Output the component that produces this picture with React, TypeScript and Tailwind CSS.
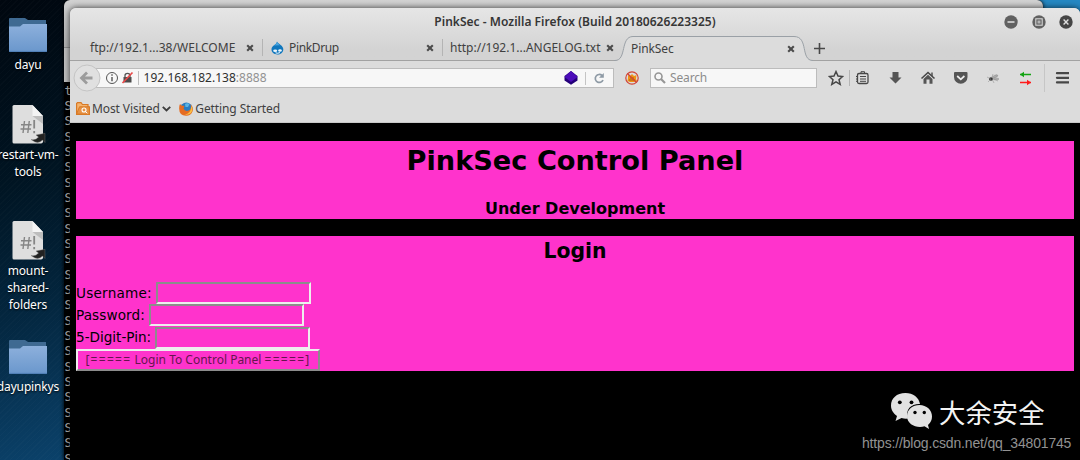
import React from "react";

const UI = "font-['Noto_Sans',sans-serif]";

function Folder() {
  return (
    <svg width="38" height="35" viewBox="0 0 38 35" className="mt-px block">
      <defs>
        <linearGradient id="fold" x1="0" y1="0" x2="0" y2="1">
          <stop offset="0" stopColor="#8db0dc" />
          <stop offset="1" stopColor="#6a97cc" />
        </linearGradient>
      </defs>
      <path d="M0 2Q0 1 1 1H16L19 3H37V14H0Z" fill="#3f6a92" />
      <path d="M0 9.5H11L14 7H38V33.5Q38 35 37 35H1Q0 35 0 33.5Z" fill="url(#fold)" />
      <path d="M0 34.4H38" stroke="#4f7eb5" />
    </svg>
  );
}

function Script() {
  return (
    <svg width="34" height="40" viewBox="0 0 34 40" className="ml-px block">
      <path d="M2 1H20.5L31 12V37.5Q31 39.5 29 39.5H2Q.5 39.5 .5 38V2.5Q.5 1 2 1Z" fill="#dedede" />
      <path d="M20.5 12H31V20Z" fill="#bdbdbd" />
      <path d="M20.5 1L31 12H20.5Z" fill="#f4f4f4" />
      <path d="M12.500 17L11 29M17.300 17L15.800 29M9 20.800H19.500M8.500 25H19" stroke="#858585" strokeWidth="1.4" fill="none" />
      <path d="M22.200 16V24.500M22.200 27V29.300" stroke="#858585" strokeWidth="1.8" />
      <path d="M19 35.500Q24 36.500 26.500 33L24 31L33 29.300V38.500L30.500 36Q26 41 19 35.500Z" fill="#222" stroke="#777" strokeWidth=".4" />
    </svg>
  );
}

function DeskIcon({ lines, kind }: { lines: string[]; kind: "folder" | "script" }) {
  return (
    <div className="flex w-[70px] flex-col items-center">
      {kind === "folder" ? <Folder /> : <Script />}
      <div
        className={
          UI +
          " text-center text-[12px] leading-[17px] tracking-[-0.15px] whitespace-nowrap text-white [text-shadow:0_1px_2px_#000] " +
          (kind === "folder" ? "mt-[4px]" : "mt-[2px]")
        }
      >
        {lines.map((l) => (
          <div key={l}>{l}</div>
        ))}
      </div>
    </div>
  );
}

function Close() {
  return (
    <svg width="8" height="8" viewBox="0 0 8 8" className="block shrink-0">
      <path d="M1.200 1.200L6.800 6.800M6.800 1.200L1.200 6.800" stroke="#4b4b4b" strokeWidth="2.1" />
    </svg>
  );
}

function Drupal() {
  return (
    <svg width="13" height="14" viewBox="0 0 13 14" className="mr-[5px] block shrink-0">
      <path d="M6 .5C7 3 12.500 4.500 12.300 8.500C12 12 9.500 13.500 6.500 13.500C3 13.500 .5 11.500 .5 8.300C.5 4.500 5.500 4 6 .5Z" fill="#1177bd" />
      <path d="M3 4.500Q5.500 3.700 6 .8Q7 3 9 4.300Z" fill="#4aa5df" />
      <ellipse cx="4.200" cy="9.800" rx="2" ry="1.200" fill="#eef6fc" />
      <ellipse cx="9" cy="9.500" rx="1.800" ry="1.200" fill="#eef6fc" />
      <path d="M4.500 11.800Q6.500 12.800 9 11.600" stroke="#fff" fill="none" />
    </svg>
  );
}

function WinButton({ dark, children }: { dark?: boolean; children: React.ReactNode }) {
  return (
    <svg width="14" height="14" viewBox="0 0 14 14" className="block">
      <circle cx="7" cy="7" r="6.700" fill={dark ? "#454545" : "#616161"} />
      {children}
    </svg>
  );
}

function TitleBar() {
  return (
    <div className="flex h-[27px] items-center">
      <div className={UI + " w-[1010px] shrink-0 text-center text-[12px] font-semibold tracking-[0.03px] text-[#363636]"}>
        PinkSec - Mozilla Firefox (Build 20180626223325)
      </div>
      <div className="-ml-[76px] flex shrink-0 gap-[13.500px]">
        <WinButton><path d="M3.500 7H10.500" stroke="#e2e2e2" strokeWidth="1.500" /></WinButton>
        <WinButton>
          <rect x="3.800" y="3.800" width="6.400" height="6.400" fill="none" stroke="#d6d6d6" strokeWidth="1.100" />
          <rect x="5.500" y="5.500" width="3" height="3" fill="#b5b5b5" />
        </WinButton>
        <WinButton dark><path d="M4.600 4.600L9.400 9.400M9.400 4.600L4.600 9.400" stroke="#dedede" strokeWidth="1.400" /></WinButton>
      </div>
    </div>
  );
}

function Tabs() {
  return (
    <div className={UI + " flex h-[26px] border-b border-[#a2a2a2] pl-[12px] text-[12px] text-[#404040]"}>
      <div className="flex w-[180px] items-center pt-px pr-2 pl-[8px]">
        <span className="flex-1 whitespace-nowrap tracking-[0.03px]">ftp://192.1...38/WELCOME</span>
        <Close />
      </div>
      <div className="my-[4px] w-px bg-[#b4b4b4]" />
      <div className="flex w-[179px] items-center pt-px pr-2 pl-[8px]">
        <Drupal />
        <span className="flex-1 tracking-[-0.35px]">PinkDrup</span>
        <Close />
      </div>
      <div className="my-[4px] w-px bg-[#b4b4b4]" />
      <div className="flex w-[171px] items-center pt-px pl-[7px]">
        <span className="w-[156px] shrink-0 whitespace-nowrap">http://192.1...ANGELOG.txt</span>
        <Close />
      </div>
      <div className="relative -mb-px flex h-[26px] w-[200px] items-center pt-px pr-[19px] pl-[17px]">
        <svg className="absolute top-0 left-0" width="200" height="26" viewBox="0 0 200 26">
          <path d="M-3 25.500H1C13 25.500 6 1.500 19 1.500H180C195 1.500 186 25.500 199 25.500V26H-3Z" fill="#dcdcdc" />
          <path d="M-3 25.500H1C13 25.500 6 1.500 19 1.500H180C195 1.500 186 25.500 199 25.500" fill="none" stroke="#9aa0a6" />
        </svg>
        <span className="relative flex-1 tracking-[-0.1px]">PinkSec</span>
        <div className="relative"><Close /></div>
      </div>
      <svg width="11" height="11" viewBox="0 0 11 11" className="mt-[8px] ml-[-0.500px] block">
        <path d="M5.500 0V11M0 5.500H11" stroke="#484848" strokeWidth="1.600" />
      </svg>
    </div>
  );
}

function NavIcons() {
  return (
    <svg width="250" height="34" viewBox="0 0 250 34" className="block shrink-0" fill="none" stroke="#474747">
      <path d="M17 10.500L19 15L23.500 15.500L20 18.700L21.200 23.300L17 20.800L12.800 23.300L14 18.700L10.500 15.500L15 15Z" strokeWidth="1.500" />
      <path d="M30.500 9V25" stroke="#b5b5b5" />
      <rect x="38.500" y="12.500" width="10.500" height="10" rx="1.500" strokeWidth="1.300" />
      <path d="M42 12V10.700H45.500V12M41 15.500H47M41 18H47M41 20.300H47M37 15.500H39M37 18H39M37 20.300H39" strokeWidth="1" />
      <path d="M73.500 11H79.500V16.500H82.500L76.500 22.500L70.500 16.500H73.500Z" fill="#555" stroke="none" />
      <path d="M102.500 17.500L109 11.500L115.500 17.500" strokeWidth="1.600" />
      <path d="M104.500 18L109 13.800L113.500 18V22.800H110.500V18.500H107.500V22.800H104.500Z" fill="#555" stroke="none" />
      <path d="M113 11.500V15" strokeWidth="1.400" />
      <path d="M136 11H147.500Q148.500 11 148.500 12V16A6.500 6.500 0 0 1 135 16V12Q135 11 136 11Z" fill="#555" stroke="none" />
      <path d="M138.200 15L141.800 18.300L145.400 15" stroke="#eee" strokeWidth="1.700" />
      <g stroke="#888" strokeWidth=".5">
        <ellipse cx="172" cy="18" rx="2" ry="1.700" fill="#333" stroke="none" />
        <ellipse cx="176" cy="15.500" rx="3" ry="1.200" fill="#aaa" transform="rotate(-25 176 15.500)" />
        <ellipse cx="177" cy="18" rx="3" ry=".9" fill="#bbb" />
        <path d="M168 16L172 18L169 21M173 18L175 22M173 16L174 13M175 18L179 20" />
      </g>
      <path d="M201 13.500H212" stroke="#12a312" strokeWidth="1.300" />
      <path d="M201 13.500L205 10.800V16.200Z" fill="#12a312" stroke="none" />
      <path d="M201 21.500H212" stroke="#ff1b1b" strokeWidth="1.300" />
      <path d="M212 21.500L208 18.800V24.200Z" fill="#ff1b1b" stroke="none" />
      <path d="M225.500 3V31" stroke="#c6c6c6" />
      <path d="M238 12.200H250M238 16.800H250M238 21.400H250" strokeWidth="2.300" strokeLinecap="round" />
    </svg>
  );
}

function NavBar() {
  return (
    <div className={UI + " flex h-[34px] items-center text-[12px]"}>
      <svg width="29" height="28" viewBox="0 0 29 28" className="relative z-10 ml-[3px] block shrink-0">
        <circle cx="14" cy="14" r="13" fill="#e0e0e0" stroke="#c4c4c4" />
        <path d="M14 8.500L8.500 14L14 19.500M9 14H19.500" stroke="#9c9c9c" strokeWidth="2.800" fill="none" />
      </svg>
      <div className="-ml-[6px] flex h-[20px] w-[518px] shrink-0 items-center border border-[#bcbcbc] bg-[#f7f7f7] pl-[8px]">
        <svg width="37" height="18" viewBox="0 0 37 18" className="block shrink-0" fill="none">
          <circle cx="7" cy="9" r="5.500" stroke="#555" />
          <path d="M7 8V12.300M7 5.300V6.800" stroke="#444" strokeWidth="1.300" />
          <path d="M18.500 8H26.500V13.500H18.500Z" fill="#4b4b4b" />
          <path d="M20 9V6.500Q20 4.300 22.500 4.300T25 6.500V9" stroke="#555" strokeWidth="1.300" />
          <path d="M17.500 14L27.500 3.500" stroke="#e84949" strokeWidth="1.700" />
          <path d="M33.500 2V16" stroke="#bdbdbd" />
        </svg>
        <span className="ml-[1.500px] tracking-[0.020px] text-[#303030]">192.168.182.138<span className="text-[#929292]">:8888</span></span>
        <svg width="45" height="18" viewBox="0 0 45 18" className="mr-[4px] ml-auto block shrink-0" fill="none">
          <path d="M7 2L13.500 7V11.500L7 15.700L.5 11.500V7Z" fill="#240079" />
          <path d="M7 2L13.500 8L7 13L.5 8Z" fill="#4c0cba" />
          <path d="M21.500 3V16" stroke="#c4c4c4" />
          <path d="M38 6.500A4 4 0 1 0 39 11" stroke="#8e9aa5" strokeWidth="1.700" />
          <path d="M39.800 4V8.800H35Z" fill="#8e9aa5" />
        </svg>
      </div>
      <svg width="14" height="14" viewBox="0 0 14 14" className="ml-[11px] block shrink-0">
        <path d="M3 4L5 5L7 3L9 5L11.500 4L11 8L12 10L9 11L5 11L2.500 10L3 7Z" fill="#ef9414" />
        <path d="M5 7H9M4 9H10" stroke="#a85d12" />
        <circle cx="7" cy="7" r="6.200" stroke="#d24536" strokeWidth="1.200" fill="none" />
        <path d="M2.500 2.500L11.500 11.500" stroke="#d24536" strokeWidth="1.200" />
      </svg>
      <div className="ml-[11px] flex h-[20px] w-[167px] shrink-0 items-center border border-[#bcbcbc] bg-[#f7f7f7] pl-[3px] tracking-[-0.15px] text-[#8c8c8c]">
        <svg width="12" height="12" viewBox="0 0 12 12" className="mr-[4px] block">
          <circle cx="4.500" cy="4.500" r="3.500" stroke="#969696" strokeWidth="1.600" fill="none" />
          <path d="M7 7L11 11" stroke="#969696" strokeWidth="2.200" />
        </svg>
        Search
      </div>
      <div className="ml-[2px]"><NavIcons /></div>
    </div>
  );
}

function Bookmarks() {
  return (
    <div className={UI + " flex h-[28px] items-center border-b border-[#c8c8c8] pl-[6px] text-[12px] text-[#404040]"}>
      <svg width="14" height="13" viewBox="0 0 14 13" className="mr-[2px] block">
        <path d="M.6 12.400V1.500L1.500 .6H5L6.500 2.500H12V5H13.400V12.400Z" fill="#f5b46e" stroke="#d87925" strokeWidth="1.200" />
        <path d="M.6 12L3.500 4.800H13.400V12.400Z" fill="#e69245" stroke="#d87925" />
        <circle cx="8" cy="8" r="2" stroke="#fff" fill="none" strokeWidth="1.100" />
        <path d="M9.500 9.500L11.300 11.300" stroke="#fff" />
      </svg>
      <span className="tracking-[-0.1px]">Most Visited</span>
      <svg width="9" height="6" viewBox="0 0 9 6" className="ml-[2px] block">
        <path d="M.8 .8L4.500 4.500L8.200 .8" stroke="#3d3d3d" strokeWidth="1.900" fill="none" />
      </svg>
      <svg width="14" height="14" viewBox="0 0 14 14" className="mr-[2px] ml-[8.500px] block">
        <circle cx="7.300" cy="6.500" r="6" fill="#2a7dc1" />
        <path d="M6 2Q8 .5 10.500 2L9 5L6.500 5Z" fill="#59b5e5" />
        <path d="M1 2L2.500 3.500L5.500 4L4.500 6.500Q5.500 9.500 9 8.800Q12 8 12 4.500L11.500 2Q15 6 13.500 9.500Q11.500 14 7 13.800Q.2 13.500 .2 7Q0 4 1 2Z" fill="#e56c22" />
        <path d="M12.500 4Q14.500 7.500 12 11Q9.500 13.500 6 12.500Q11.500 12 12.500 4Z" fill="#f8c144" />
      </svg>
      <span className="tracking-[-0.1px]">Getting Started</span>
    </div>
  );
}

function Field({ label, spacing }: { label: string; spacing: string }) {
  return (
    <label className="flex h-[22.400px] items-center">
      <span className={"mr-[4px] whitespace-nowrap " + spacing}>{label}</span>
      <input className="h-[22px] w-[155px] border-2 border-t-[#8c8c8c] border-r-[#eeeeee] border-b-[#eeeeee] border-l-[#8c8c8c] bg-[#ff33cc] outline-none" />
    </label>
  );
}

function Page() {
  return (
    <div className="flex flex-1 flex-col bg-black px-[6px] pt-[18px] font-['DejaVu_Sans',sans-serif] text-black">
      <div className="h-[78px] bg-[#ff33cc] text-center font-bold">
        <h1 className="pt-[3px] text-[27.200px] leading-[34px]">PinkSec Control Panel</h1>
        <h3 className="pt-[21px] text-[16px] leading-[20px]">Under Development</h3>
      </div>
      <div className="mt-[17px] h-[135px] bg-[#ff33cc] text-[13.600px]">
        <h2 className="h-[45.600px] pt-[2px] text-center text-[20.400px] leading-[26px] font-bold">Login</h2>
        <Field label="Username:" spacing="tracking-[0.22px]" />
        <Field label="Password:" spacing="tracking-[0.1px]" />
        <Field label="5-Digit-Pin:" spacing="tracking-[-0.02px]" />
        <button className={UI + " block h-[22px] w-[244px] border-2 border-t-[#eeeeee] border-r-[#8c8c8c] border-b-[#8c8c8c] border-l-[#eeeeee] text-[12px] leading-[18px] whitespace-nowrap text-[#67154f]"}>
          <span className="tracking-[1.300px]">[=====</span> Login To Control Panel <span className="tracking-[1.300px]">=====]</span>
        </button>
      </div>
    </div>
  );
}

export default function App() {
  return (
    <div className="relative h-[460px] w-[1080px] overflow-hidden bg-[#2588c3]">
      <div className="absolute inset-y-0 left-0 w-[70px] bg-[repeating-linear-gradient(135deg,#ffffff04_0px,#ffffff04_1px,transparent_1px,transparent_4px),linear-gradient(165deg,#00070f_0%,#001422_38%,#03253d_65%,#0b426b_100%)]" />
      <div className="absolute top-[16px] left-[-7px]"><DeskIcon kind="folder" lines={["dayu"]} /></div>
      <div className="absolute top-[104px] left-[-7px]"><DeskIcon kind="script" lines={["restart-vm-", "tools"]} /></div>
      <div className="absolute top-[220px] left-[-7px]"><DeskIcon kind="script" lines={["mount-", "shared-", "folders"]} /></div>
      <div className="absolute top-[338px] left-[-7px]"><DeskIcon kind="folder" lines={["dayupinkys"]} /></div>

      <div className="absolute top-0 left-[64px] flex h-[460px] w-[979px] flex-col overflow-hidden rounded-t-[6px] bg-black shadow-[0_0_4px_#000]">
        <div className="h-[48px] shrink-0 border-b border-[#8d8d8d] bg-linear-to-b from-[#d2d2d2] to-[#b0b0b0]" />
        <div className="h-[34px] shrink-0 bg-[#c0c0c0]" />
        <div className="pt-[1.500px] pl-[0.500px] font-['DejaVu_Sans_Mono',monospace] text-[12px] leading-[15.350px] text-[#b5b5b5]">
          <div>t</div>
          {Array.from({ length: 24 }, (_, i) => (
            <div key={i}>S</div>
          ))}
        </div>
      </div>

      <div className="absolute top-[8px] left-[70px] flex h-[452px] w-[1010px] flex-col overflow-hidden rounded-t-[6px] bg-[#dcdcdc] shadow-[0_0_6px_#000b]">
        <div className="bg-linear-to-b from-[#e6e6e6] to-[#d3d3d3] to-80%">
          <TitleBar />
          <Tabs />
        </div>
        <NavBar />
        <Bookmarks />
        <Page />
      </div>

      <div className="absolute top-[391px] left-[890px] flex items-center">
        <svg width="43" height="38" viewBox="0 0 43 38" className="block">
          <path d="M15.500 1C6.500 1 1 6.500 1 13.500C1 18 3.500 21.500 7 24L5.500 29L11.500 26Q15 27 18 26.500C14.500 17 22 11.500 30 12C29 5.500 23 1 15.500 1Z" fill="#e2e2e2" />
          <path d="M29.500 13C22.500 13 17 17.500 17 24C17 31 23.500 35 30 35Q32.500 35 34.500 34.300L39 37L38 33Q42 29.500 42 24.500C42 18 36.500 13 29.500 13Z" fill="#e2e2e2" />
          <circle cx="9.800" cy="10.300" r="1.900" /><circle cx="21.500" cy="10.300" r="1.900" />
          <circle cx="25" cy="20.500" r="1.700" /><circle cx="34.300" cy="20.500" r="1.700" />
        </svg>
        <span className="mt-[2px] ml-[6px] text-[26.400px] leading-[38px] whitespace-nowrap text-[#f3f3f3] font-['Noto_Sans_CJK_SC',sans-serif]">大余安全</span>
      </div>
      <div className="absolute top-[433px] left-[862px] font-['Liberation_Sans',sans-serif] text-[14px] leading-[20px] tracking-[-0.17px] whitespace-nowrap text-[#929292]">
        https://blog.csdn.net/qq_34801745
      </div>
    </div>
  );
}
